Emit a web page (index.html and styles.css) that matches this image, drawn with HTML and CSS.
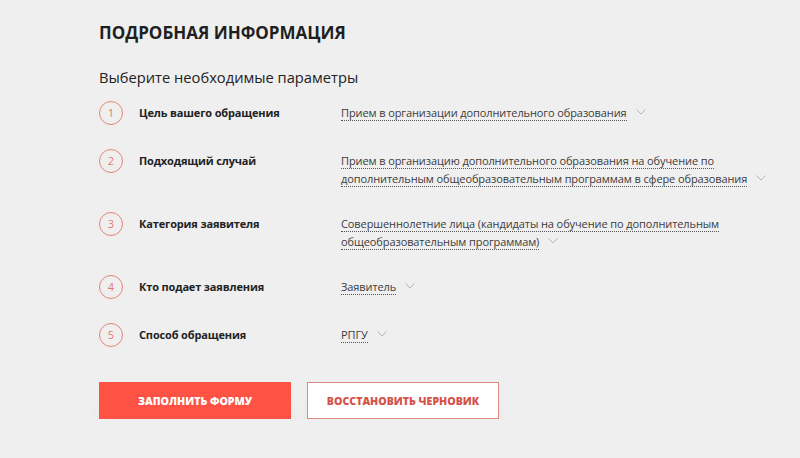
FILE: index.html
```html
<!DOCTYPE html>
<html lang="ru">
<head>
    <meta charset="UTF-8">
    <meta name="viewport" content="width=device-width, initial-scale=1.0">
    <title>Подробная информация</title>
    <link rel="stylesheet" href="styles.css">
</head>
<body>
    <div class="container">
        <h1>Подробная информация</h1>
        <h2>Выберите необходимые параметры</h2>

        <div class="steps">
            <div class="step">
                <div class="num">1</div>
                <div class="label">Цель вашего обращения</div>
                <div class="value"><span class="pick">Прием в организации дополнительного образования</span><svg class="chev" width="10" height="6" viewBox="0 0 10 6"><path d="M0.5 0.5 L5 5 L9.5 0.5" fill="none" stroke="#b5b5b5" stroke-width="1"/></svg></div>
            </div>
            <div class="step">
                <div class="num">2</div>
                <div class="label">Подходящий случай</div>
                <div class="value"><span class="pick">Прием в организацию дополнительного образования на обучение по дополнительным общеобразовательным программам в сфере образования</span><svg class="chev" width="10" height="6" viewBox="0 0 10 6"><path d="M0.5 0.5 L5 5 L9.5 0.5" fill="none" stroke="#b5b5b5" stroke-width="1"/></svg></div>
            </div>
            <div class="step">
                <div class="num">3</div>
                <div class="label">Категория заявителя</div>
                <div class="value"><span class="pick">Совершеннолетние лица (кандидаты на обучение по дополнительным общеобразовательным программам)</span><svg class="chev" width="10" height="6" viewBox="0 0 10 6"><path d="M0.5 0.5 L5 5 L9.5 0.5" fill="none" stroke="#b5b5b5" stroke-width="1"/></svg></div>
            </div>
            <div class="step">
                <div class="num">4</div>
                <div class="label">Кто подает заявления</div>
                <div class="value"><span class="pick">Заявитель</span><svg class="chev" width="10" height="6" viewBox="0 0 10 6"><path d="M0.5 0.5 L5 5 L9.5 0.5" fill="none" stroke="#b5b5b5" stroke-width="1"/></svg></div>
            </div>
            <div class="step">
                <div class="num">5</div>
                <div class="label">Способ обращения</div>
                <div class="value"><span class="pick">РПГУ</span><svg class="chev" width="10" height="6" viewBox="0 0 10 6"><path d="M0.5 0.5 L5 5 L9.5 0.5" fill="none" stroke="#b5b5b5" stroke-width="1"/></svg></div>
            </div>
        </div>

        <div class="actions">
            <a href="#" class="btn btn-primary">Заполнить форму</a>
            <a href="#" class="btn btn-outline">Восстановить черновик</a>
        </div>
    </div>
</body>
</html>
```

FILE: styles.css
```css
body {
    margin: 0;
    background-color: #efefef;
    font-family: "Open Sans", Arial, sans-serif;
    color: #222;
}
.container {
    padding: 21px 0 0 99px;
}
h1 {
    margin: 0;
    font-size: 17px;
    font-weight: 700;
    text-transform: uppercase;
    line-height: 24px;
    color: #1f1f1f;
}
h2 {
    margin: 22px 0 0;
    font-size: 14.7px;
    font-weight: 400;
    line-height: 20px;
    color: #222;
}
.steps {
    margin-top: 14px;
}
.step {
    display: flex;
    align-items: flex-start;
    margin-bottom: 24px;
}
.num {
    width: 22px;
    height: 22px;
    border: 1px solid #e3857d;
    border-radius: 50%;
    color: #e07a70;
    font-size: 11px;
    line-height: 22px;
    text-align: center;
    flex-shrink: 0;
}
.label {
    width: 202px;
    margin-left: 16px;
    padding-top: 3px;
    font-size: 11px;
    font-weight: 700;
    letter-spacing: -0.15px;
    line-height: 18px;
    color: #222;
}
.value {
    width: 440px;
    padding-top: 3px;
    font-size: 11px;
    letter-spacing: -0.1px;
    line-height: 18px;
    color: #3c3c3c;
}
.pick {
    border-bottom: 1px dotted #555;
}
.chev {
    margin-left: 9px;
    vertical-align: 2px;
}
.actions {
    display: flex;
    gap: 16px;
    margin-top: 35px;
}
.btn {
    display: flex;
    align-items: center;
    justify-content: center;
    width: 192px;
    height: 37px;
    box-sizing: border-box;
    font-size: 10.6px;
    font-weight: 800;
    text-transform: uppercase;
    text-decoration: none;
    box-shadow: 0 18px 20px -8px rgba(0, 0, 0, 0.13);
}
.btn-primary {
    background: #fd5244;
    color: #fff;
}
.btn-outline {
    background: #fff;
    border: 1px solid #dc8a84;
    color: #d5524a;
}
```
